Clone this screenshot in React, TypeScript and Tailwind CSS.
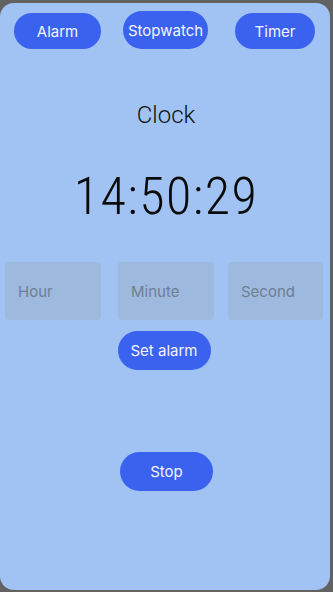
import React from "react";

export default function App() {
  const btn =
    "flex items-center justify-center rounded-full bg-[#3a62ef] text-[#f2f5ff] text-[15px] leading-none";
  const box =
    "h-[58px] rounded-[4px] bg-[#9db9de] flex items-center pl-[13px] pt-[3px] text-[15px] text-[#6f7f93]";
  return (
    <div
      className="w-[333px] h-[592px] bg-[#626262] pt-[3px] overflow-hidden"
      style={{ fontFamily: "Inter, 'Noto Sans', sans-serif" }}
    >
      <div className="w-[330px] h-[587px] rounded-[14px] bg-[#a0c3f3] flex flex-col">
        <div className="flex items-start pt-[8px]">
          <div className={`${btn} ml-[14px] mt-[2px] w-[87px] h-[36px]`}>Alarm</div>
          <div className={`${btn} ml-[22px] w-[85px] h-[38px]`}>Stopwatch</div>
          <div className={`${btn} ml-[27px] mt-[2px] w-[80px] h-[36px]`}>Timer</div>
        </div>
        <div
          className="mt-[51px] text-center text-[24px] leading-[30px] text-[#111] pl-[2px]"
          style={{ fontFamily: "Roboto, sans-serif", fontWeight: 300 }}
        >
          Clock
        </div>
        <div
          className="mt-[39px] text-center text-[52px] leading-[56px] text-[#0a0a0a] tracking-[1.5px] pl-[2px]"
          style={{ fontFamily: "Roboto, sans-serif", fontWeight: 300, fontStretch: "condensed" }}
        >
          14:50:29
        </div>
        <div className="flex mt-[37px] pl-[5px]">
          <div className={`${box} w-[96px]`}>Hour</div>
          <div className={`${box} w-[96px] ml-[17px]`}>Minute</div>
          <div className={`${box} w-[95px] ml-[14px] pl-[12px]`}>Second</div>
        </div>
        <div className="flex justify-center mt-[11px] pr-[2px]">
          <div className={`${btn} w-[93px] h-[39px]`}>Set alarm</div>
        </div>
        <div className="flex justify-center mt-[82px] pl-[3px]">
          <div className={`${btn} w-[93px] h-[39px]`}>Stop</div>
        </div>
      </div>
    </div>
  );
}
